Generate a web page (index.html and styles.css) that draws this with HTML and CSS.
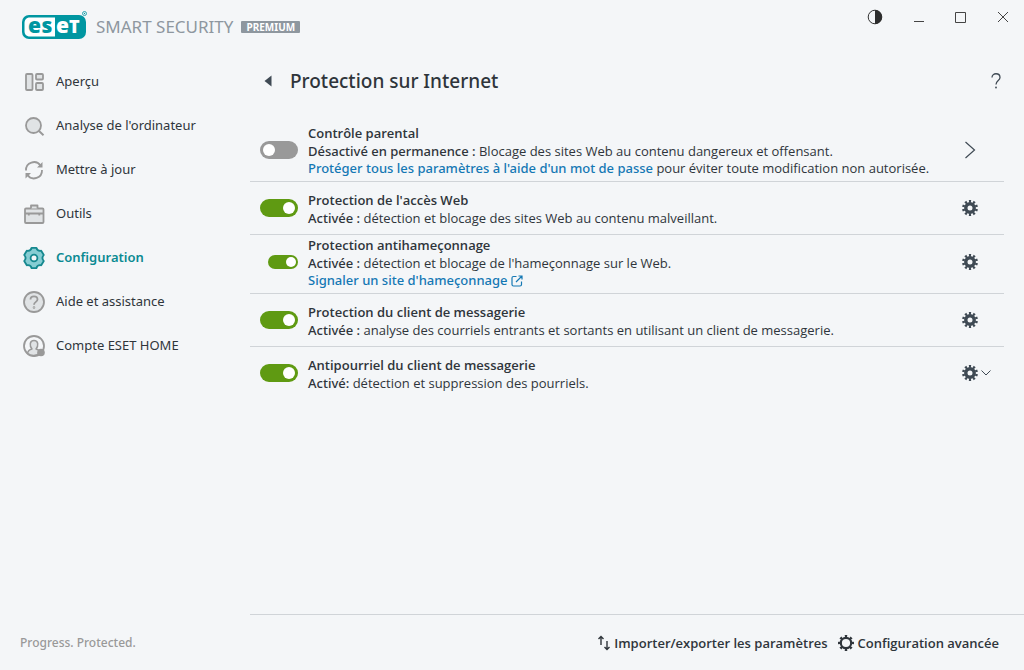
FILE: index.html
```html
<!DOCTYPE html>
<html lang="fr">
<head>
	<meta charset="UTF-8">
	<title>ESET Smart Security Premium</title>
	<link rel="stylesheet" href="styles.css">
</head>
<body>
	<!-- shared gear shapes -->
	<svg class="defs" aria-hidden="true">
		<symbol id="gear" viewBox="0 0 16 16">
			<circle cx="8" cy="8" r="4.2" fill="none" stroke="currentColor" stroke-width="3.4"/>
			<circle cx="8" cy="8" r="6.7" fill="none" stroke="currentColor" stroke-width="2.6" pathLength="100" stroke-dasharray="5 5" stroke-dashoffset="2.5" transform="rotate(-90 8 8)"/>
		</symbol>
		<symbol id="gear-thin" viewBox="0 0 16 16">
			<circle cx="8" cy="8" r="5.2" fill="none" stroke="currentColor" stroke-width="2.2"/>
			<circle cx="8" cy="8" r="6.9" fill="none" stroke="currentColor" stroke-width="2.2" pathLength="80" stroke-dasharray="4.4 5.6" stroke-dashoffset="2.2" transform="rotate(-90 8 8)"/>
		</symbol>
	</svg>

	<div class="window">
		<header class="titlebar">
			<div class="brand">
				<svg class="logo" width="67" height="30" viewBox="0 0 67 30">
					<rect x="0" y="5" width="64" height="24" rx="7" fill="#0096a1"/>
					<path d="M8 7.5H33V26.500H8C4 26.500 2.500 24 2.500 21V13C2.500 10 4 7.500 8 7.500Z" fill="#fff"/>
					<text x="6" y="23" class="logo-text" fill="#0096a1">e</text>
					<text x="19.500" y="23" class="logo-text" fill="#0096a1">s</text>
					<text x="34" y="23" class="logo-text" fill="#fff">e</text>
					<text x="47" y="23" class="logo-text logo-t" fill="#fff">T</text>
					<circle cx="62.500" cy="3.500" r="2" fill="none" stroke="#0096a1" stroke-width=".8"/>
					<circle cx="62.500" cy="3.500" r=".7" fill="#0096a1"/>
				</svg>
				<span class="product">SMART SECURITY</span>
				<span class="edition">PREMIUM</span>
			</div>
			<div class="controls">
				<button aria-label="Contraste">
					<svg width="16" height="16" viewBox="0 0 16 16"><circle cx="8" cy="8" r="6.800" fill="none" stroke="#333" stroke-width="1"/><path d="M8 1a7 7 0 0 1 0 14z" fill="#2d2d2d"/></svg>
				</button>
				<button aria-label="Réduire">
					<svg width="12" height="12" viewBox="0 0 12 12"><path d="M1 10.500h10" stroke="#444"/></svg>
				</button>
				<button aria-label="Agrandir">
					<svg width="12" height="12" viewBox="0 0 12 12"><path d="M.5 1.500h10v10H.5z" fill="none" stroke="#444"/></svg>
				</button>
				<button aria-label="Fermer">
					<svg width="12" height="12" viewBox="0 0 12 12"><path d="M1 1l10 10M11 1L1 11" stroke="#444"/></svg>
				</button>
			</div>
		</header>

		<nav class="menu">
			<a href="#">
				<svg width="24" height="24" viewBox="0 0 24 24" class="icon"><rect x="4" y="4" width="6.500" height="16" rx="1"/><rect x="14" y="4" width="7" height="5.500" rx="1"/><rect x="14" y="13" width="7" height="7" rx="1"/></svg>
				Aperçu
			</a>
			<a href="#">
				<svg width="24" height="24" viewBox="0 0 24 24" class="icon"><circle cx="11.500" cy="11.500" r="7.500"/><path d="M17 17l4.500 4.200" stroke-width="2"/></svg>
				Analyse de l'ordinateur
			</a>
			<a href="#">
				<svg width="24" height="24" viewBox="0 0 24 24" class="icon line"><path d="M4 12.500A8 8 0 0 1 18.500 7.500M20 12a8 8 0 0 1-14.500 5"/><path d="M20.500 4v5.500h-5.500zM3.500 20.500v-5.500h5.500z" class="solid"/></svg>
				Mettre à jour
			</a>
			<a href="#">
				<svg width="24" height="24" viewBox="0 0 24 24" class="icon"><rect x="3" y="6.500" width="18.500" height="14.500" rx="1"/><path d="M9 6.500V3.500h6.500v3M3 11.500h18.500"/><path d="M6.800 11.500v2M17.300 11.500v2" stroke-width="1.800"/></svg>
				Outils
			</a>
			<a href="#" class="active" aria-current="page">
				<svg width="24" height="24" viewBox="0 0 24 24" class="icon"><path d="M9.600 1.800h4.800Q15.200 5.400 19.200 4.700L21.800 9Q19 12 21.800 15L19.200 19.300Q15.200 18.600 14.400 22.200H9.600Q8.800 18.600 4.800 19.300L2.200 15Q5 12 2.200 9L4.800 4.700Q8.800 5.400 9.600 1.800z"/><circle cx="12" cy="12" r="3.400" fill="#f4f6f8"/></svg>
				Configuration
			</a>
			<a href="#">
				<svg width="24" height="24" viewBox="0 0 24 24" class="icon"><circle cx="12" cy="12" r="10"/><path d="M8.500 9.500C8.500 5.200 15.500 5.200 15.500 9.500C15.500 12 12 11.800 12 14.800" fill="none"/><circle cx="12" cy="17.500" r=".4"/></svg>
				Aide et assistance
			</a>
			<a href="#">
				<svg width="24" height="24" viewBox="0 0 24 24" class="icon"><circle cx="12" cy="12" r="10" fill="none"/><path d="M5.500 19.300C6 16.500 8 15.500 10 15C7.300 12 7.500 6.500 12 6.500S16.700 12 14 15C16 15.500 17.500 16.500 18 18.500C15 22.500 9 22.500 5.500 19.300z" stroke-width="1.500"/><circle cx="19" cy="18.500" r="3.800" class="solid"/></svg>
				Compte ESET HOME
			</a>
		</nav>

		<main class="content">
			<div class="heading">
				<button class="back" aria-label="Retour"><svg width="8" height="12" viewBox="0 0 8 12"><path d="M7.500 .5v11L.5 6z" fill="#3f4a54"/></svg></button>
				<h1>Protection sur Internet</h1>
				<button class="help" aria-label="Aide"><svg width="12" height="18" viewBox="0 0 12 18"><path d="M2 5.500C2 .5 10 .5 10 5.500C10 8.500 6 8.500 6 12.500" fill="none" stroke="#3f4a54" stroke-width="1.300"/><circle cx="6" cy="15.500" r=".9" fill="#3f4a54"/></svg></button>
			</div>

			<ul class="modules">
				<li class="tall">
					<input type="checkbox" class="toggle" id="parental">
					<div class="text">
						<label for="parental">Contrôle parental</label>
						<p><b>Désactivé en permanence :</b> Blocage des sites Web au contenu dangereux et offensant.</p>
						<p class="more"><a href="#">Protéger tous les paramètres à l'aide d'un mot de passe</a> pour éviter toute modification non autorisée.</p>
					</div>
					<button class="action" aria-label="Ouvrir"><svg width="16" height="18" viewBox="0 0 16 18"><path d="M3.500 1l9 8-9 8" fill="none" stroke="currentColor" stroke-width="1.200"/></svg></button>
				</li>
				<li>
					<input type="checkbox" class="toggle" id="web" checked>
					<div class="text">
						<label for="web">Protection de l'accès Web</label>
						<p><b>Activée :</b> détection et blocage des sites Web au contenu malveillant.</p>
					</div>
					<button class="action" aria-label="Paramètres"><svg width="16" height="16"><use href="#gear"/></svg></button>
				</li>
				<li class="tall">
					<input type="checkbox" class="toggle small" id="phishing" checked>
					<div class="text">
						<label for="phishing">Protection antihameçonnage</label>
						<p><b>Activée :</b> détection et blocage de l'hameçonnage sur le Web.</p>
						<p class="more"><a href="#">Signaler un site d'hameçonnage <svg width="12" height="12" viewBox="0 0 12 12" class="external"><path d="M5.500 1.500H2.500Q1 1.500 1 3v6.500Q1 11 2.500 11H9q1.500 0 1.500-1.500v-3M7.500 1H11v3.500M11 1L5 7"/></svg></a></p>
					</div>
					<button class="action" aria-label="Paramètres"><svg width="16" height="16"><use href="#gear"/></svg></button>
				</li>
				<li>
					<input type="checkbox" class="toggle" id="mail" checked>
					<div class="text">
						<label for="mail">Protection du client de messagerie</label>
						<p><b>Activée :</b> analyse des courriels entrants et sortants en utilisant un client de messagerie.</p>
					</div>
					<button class="action" aria-label="Paramètres"><svg width="16" height="16"><use href="#gear"/></svg></button>
				</li>
				<li>
					<input type="checkbox" class="toggle" id="spam" checked>
					<div class="text">
						<label for="spam">Antipourriel du client de messagerie</label>
						<p><b>Activé:</b> détection et suppression des pourriels.</p>
					</div>
					<button class="action" aria-label="Paramètres"><svg width="16" height="16"><use href="#gear"/></svg><svg width="10" height="6" viewBox="0 0 10 6"><path d="M.5 .5L5 5 9.500 .5" fill="none" stroke="currentColor"/></svg></button>
				</li>
			</ul>
		</main>

		<div class="slogan">Progress. Protected.</div>
		<footer class="footer">
			<button>
				<svg width="12" height="16" viewBox="0 0 12 16" fill="none" stroke="currentColor" stroke-width="1.400"><path d="M3 10V1.500M.5 4L3 1.500 5.500 4M9 6v8.500M6.500 12L9 14.500l2.500-2.500"/></svg>
				Importer/exporter les paramètres
			</button>
			<button>
				<svg width="16" height="16"><use href="#gear-thin"/></svg>
				Configuration avancée
			</button>
		</footer>
	</div>
</body>
</html>
```
FILE: styles.css
```css
* {
	box-sizing: border-box;
	margin: 0;
	padding: 0;
}
body {
	background: #f4f6f8;
	color: #2f353b;
	font: 13px/18px "Noto Sans", "Open Sans", sans-serif;
}
button {
	background: none;
	border: 0;
	color: inherit;
	font: inherit;
	cursor: pointer;
}
a {
	color: #1478b4;
	text-decoration: none;
}
svg {
	display: block;
	flex: none;
}
.defs {
	position: absolute;
	width: 0;
	height: 0;
}
.window {
	display: grid;
	grid-template: auto 1fr 56px / 250px 1fr;
	min-height: 100vh;
}

/* title bar */
.titlebar {
	grid-column: 1 / -1;
	display: flex;
	justify-content: space-between;
	align-items: flex-start;
	height: 59px;
	padding: 9px 15px 0 22px;
}
.brand {
	display: flex;
	align-items: center;
}
.logo {
	margin-top: 1px;
}
.logo-text {
	font: 800 21px "Open Sans", sans-serif;
}
.logo-t {
	font-size: 18px;
}
.product {
	margin: 4px 8px 0 7px;
	color: #8e979f;
	font-size: 17px;
	line-height: 24px;
}
.edition {
	margin-top: 4px;
	padding: 0 5px;
	border-radius: 1px;
	background: #8e979f;
	color: #fff;
	font-size: 10px;
	font-weight: 700;
	line-height: 12px;
}
.controls {
	display: flex;
	align-items: center;
	gap: 30px;
}

/* left menu */
.menu a {
	display: flex;
	align-items: center;
	gap: 10px;
	height: 44px;
	padding-left: 22px;
	color: #2f353b;
}
.menu .active {
	color: #0a8a92;
	font-weight: 600;
}
.icon {
	margin-top: 1px;
	fill: #e0e3e5;
	stroke: #999;
	stroke-width: 1.8;
	stroke-linejoin: round;
}
.icon.line {
	fill: none;
}
.icon .solid {
	fill: #999;
	stroke-width: 0;
}
.active .icon {
	fill: #86cdd3;
	stroke: #15888f;
}

/* content */
.heading {
	display: flex;
	align-items: center;
	height: 43px;
	padding: 0 22px 0 14px;
}
.heading h1 {
	margin-left: 18px;
	font-size: 19px;
	font-weight: 500;
}
.help {
	margin-left: auto;
}
.modules {
	margin: 21px 20px 0 0;
	list-style: none;
}
.modules li {
	display: flex;
	align-items: center;
	padding: 7px 9px 7px 10px;
	border-bottom: 1px solid #d0d4d8;
}
.modules .tall {
	padding-top: 0;
	padding-bottom: 4px;
}
.modules li:last-child {
	border-bottom: 0;
}
.text {
	flex: 1;
	padding: 2px 0 0 10px;
	font-family: "Open Sans", "Noto Sans", sans-serif;
}
.tall .text {
	padding-top: 1px;
}
.text label {
	display: block;
	font-weight: 600;
}
.text b,
.more a {
	font-family: "Noto Sans", sans-serif;
	font-weight: 500;
}
.text p {
	height: 18px;
}
.text .more {
	height: 17px;
	line-height: 17px;
}
.external {
	display: inline-block;
	vertical-align: -2px;
	fill: none;
	stroke: currentColor;
	stroke-width: 1.2;
}
.toggle {
	appearance: none;
	display: flex;
	align-items: center;
	width: 38px;
	height: 18px;
	padding: 0 3px;
	border-radius: 9px;
	background: #999;
}
.toggle::before {
	content: "";
	width: 12px;
	height: 12px;
	border-radius: 50%;
	background: #fff;
}
.toggle:checked {
	justify-content: flex-end;
	background: #5f9a12;
}
.toggle.small {
	width: 30px;
	height: 14px;
	margin-left: 8px;
	padding: 0 2px;
}
.toggle.small::before {
	width: 10px;
	height: 10px;
}
.action {
	display: flex;
	align-items: center;
	gap: 3px;
	width: 33px;
	color: #3f4a54;
}

/* bottom bar */
.slogan {
	align-self: center;
	padding: 2px 0 0 20px;
	color: #999;
	font-size: 12px;
	font-weight: 500;
}
.footer {
	display: flex;
	justify-content: flex-end;
	align-items: center;
	gap: 10px;
	padding-right: 25px;
	border-top: 1px solid #d0d4d8;
	font-family: "Open Sans", "Noto Sans", sans-serif;
}
.footer button {
	display: flex;
	align-items: center;
	gap: 4px;
	font-weight: 600;
}
```
